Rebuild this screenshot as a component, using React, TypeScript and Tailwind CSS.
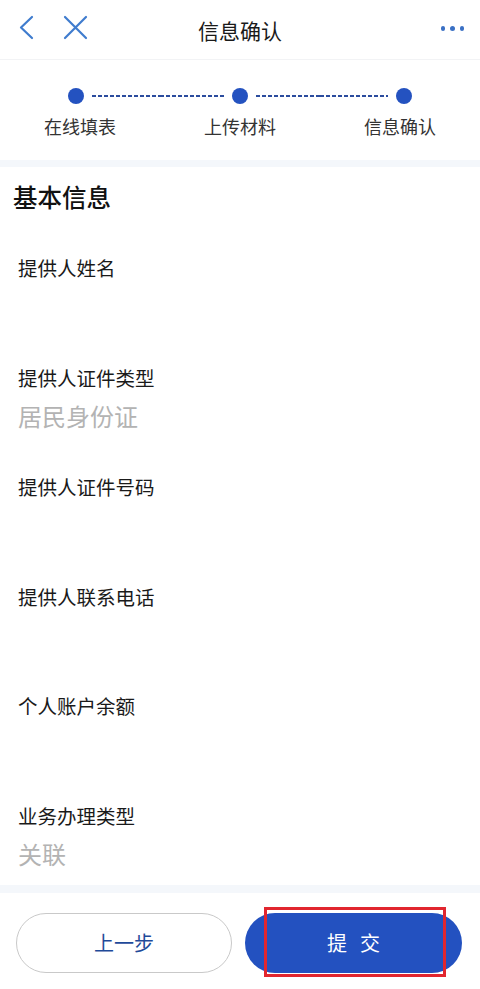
import React from 'react';

const FONT = { fontFamily: '"Noto Sans CJK SC", "Noto Sans", sans-serif' };

const STEPS = ['在线填表', '上传材料', '信息确认'];

const FIELDS: { label: string; value?: string }[] = [
  { label: '提供人姓名' },
  { label: '提供人证件类型', value: '居民身份证' },
  { label: '提供人证件号码' },
  { label: '提供人联系电话' },
  { label: '个人账户余额' },
  { label: '业务办理类型', value: '关联' },
];

const DASH =
  'h-[2px] bg-[repeating-linear-gradient(90deg,#2b4c9e_0_4px,transparent_4px_6px)]';

function NavBar() {
  return (
    <div className="relative flex h-[60px] items-center border-b border-[#f2f3f5]">
      <svg className="absolute left-[18px] top-[14px]" width="18" height="28" viewBox="0 0 18 28">
        <polyline points="14,3 3,13.5 14,24" fill="none" stroke="#3f7cce" strokeWidth="2.2" strokeLinecap="round" strokeLinejoin="round" />
      </svg>
      <svg className="absolute left-[62px] top-[14px]" width="28" height="28" viewBox="0 0 28 28">
        <path d="M3 3 L24 24 M24 3 L3 24" fill="none" stroke="#3f7cce" strokeWidth="2.2" strokeLinecap="round" />
      </svg>
      <div className="w-full text-center text-[21px] leading-[28px] text-[#1a1a1a]">信息确认</div>
      <div className="absolute right-[16px] top-[26px] flex gap-[5px]">
        <span className="h-[4.5px] w-[4.5px] rounded-full bg-[#3a70c4]" />
        <span className="h-[4.5px] w-[4.5px] rounded-full bg-[#3a70c4]" />
        <span className="h-[4.5px] w-[4.5px] rounded-full bg-[#3a70c4]" />
      </div>
    </div>
  );
}

function Stepper() {
  return (
    <div className="grid h-[100px] grid-cols-3 pt-[28px]">
      {STEPS.map((step, i) => (
        <div key={step} className="flex flex-col items-center">
          <div className="flex w-full items-center">
            <div className={`flex-1 ${i === 0 ? '' : `${DASH} mr-[8px]`}`} />
            <span className="h-[16px] w-[16px] rounded-full bg-[#2452c0]" />
            <div className={`flex-1 ${i === STEPS.length - 1 ? '' : `${DASH} ml-[8px]`}`} />
          </div>
          <span className="mt-[9px] text-[18px] leading-[26px] text-[#333]">{step}</span>
        </div>
      ))}
    </div>
  );
}

function Field({ label, value }: { label: string; value?: string }) {
  return (
    <div className="h-[109.5px] shrink-0 px-[18px]">
      <div className="text-[19.5px] leading-[28px] text-[#1a1a1a]">{label}</div>
      {value ? (
        <div className="mt-[7px] text-[24px] leading-[34px] text-[#b3b3b3]">{value}</div>
      ) : null}
    </div>
  );
}

export default function App() {
  return (
    <div className="flex h-[989px] w-[480px] flex-col overflow-hidden bg-white" style={FONT}>
      <NavBar />
      <Stepper />
      <div className="h-[7px] bg-[#f4f7fb]" />
      <div className="flex flex-1 flex-col overflow-hidden pt-[13px]">
        <div className="px-[13px] text-[24.5px] font-medium leading-[34px] text-[#111]">基本信息</div>
        <div className="mt-[40px] flex flex-col">
          {FIELDS.map((f) => (
            <Field key={f.label} label={f.label} value={f.value} />
          ))}
        </div>
      </div>
      <div className="h-[8px] bg-[#f4f7fb]" />
      <div className="flex h-[96px] items-start gap-[13px] px-[16px] pt-[20px]">
        <button className="h-[60px] w-[216px] rounded-full border border-[#c9c9c9] bg-white text-[20px] text-[#1f4a99]">
          上一步
        </button>
        <div className="relative">
          <button className="flex h-[60px] w-[217px] items-center justify-center gap-[13px] rounded-full bg-[#2351c0] text-[20px] text-white">
            <span>提</span>
            <span>交</span>
          </button>
          <div className="pointer-events-none absolute left-[19px] top-[-6px] h-[70px] w-[182px] border-[3px] border-[#e1262f]" />
        </div>
      </div>
    </div>
  );
}
